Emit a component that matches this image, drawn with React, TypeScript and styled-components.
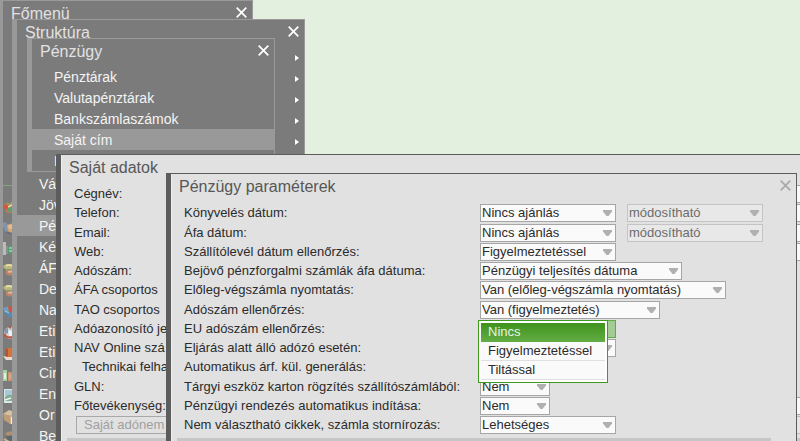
import React from "react";
import styled, { createGlobalStyle, css } from "styled-components";

const GlobalStyle = createGlobalStyle`
  *, *::before, *::after { box-sizing: border-box; }
  body {
    margin: 0;
    background: #e4f0df;
    font-family: "Liberation Sans", Arial, sans-serif;
    font-size: 13px;
    color: #2b2b2b;
  }
  button, input, select { font: inherit; color: inherit; }
`;

const Desktop = styled.main`
  position: relative;
  min-height: 100vh;
  overflow: hidden;
  background: #e4f0df;
`;

type Place = { $left: number; $top: number; $width?: number; $right?: number; $fill?: boolean };

const place = css<Place>`
  position: absolute;
  left: ${(p) => p.$left}px;
  top: ${(p) => p.$top}px;
  ${(p) => p.$width !== undefined && `width: ${p.$width}px;`}
  ${(p) => p.$right !== undefined && `right: ${p.$right}px;`}
  ${(p) => p.$fill && "bottom: 0;"}
  overflow: hidden;
`;

const MenuWindow = styled.nav<Place>`
  ${place}
  background: #7b7b7b;
  color: #f4f4f4;
  border: 1px solid #999;
  border-left-width: 5px;
  border-bottom-width: ${(p) => (p.$fill ? 0 : 1)}px;
  font-size: 14px;
`;

const FormWindow = styled.section<Place>`
  ${place}
  background: #e1e1e1;
  border: 1px solid #5c5c5c;
  border-left-width: 5px;
  border-bottom: 0;
  box-shadow: inset 1px 0 0 #f0f0f0;
`;

const Header = styled.header`
  display: flex;
  justify-content: space-between;
  align-items: flex-start;
  height: 27px;
  padding: 0 5px 0 8px;
`;

const Title = styled.h2<{ $dark?: boolean }>`
  margin: 0;
  font-size: 16px;
  font-weight: 400;
  line-height: 26px;
  color: ${(p) => (p.$dark ? "#575757" : "#e2e2e2")};
`;

const CloseButton = styled.button<{ $dim?: boolean }>`
  display: block;
  margin: 6px 0 0;
  padding: 0;
  border: 0;
  background: none;
  line-height: 0;
  color: ${(p) => (p.$dim ? "#a9a9a9" : "#fff")};
`;

const MenuList = styled.ul`
  margin: 0;
  padding: 0;
  list-style: none;
`;

const MenuItem = styled.li<{ $active?: boolean }>`
  display: flex;
  align-items: center;
  justify-content: space-between;
  height: 21px;
  padding: 0 5px 0 22px;
  line-height: 16px;
  background: ${(p) => (p.$active ? "#999" : "transparent")};
`;

const IconList = styled(MenuList)`
  margin-top: 157px;
  border-top: 1px solid #86a678;
  padding-top: 10px;
`;

const IconItem = styled.li`
  display: flex;
  align-items: center;
  height: 21px;
`;

const ownRows = css`
  > :nth-child(4n + 2) { margin-bottom: 1px; }
`;
const paramRows = css`
  > :nth-child(4n + 1) { margin-bottom: 1px; }
`;

const Form = styled.form<{ $own?: boolean }>`
  padding: 3px 0 0 13px;
  ${(p) => (p.$own ? ownRows : paramRows)}
`;

const FormRow = styled.div`
  display: flex;
  align-items: flex-start;
  height: 19px;
`;

const Label = styled.label<{ $width: number; $indent?: boolean }>`
  flex: none;
  width: ${(p) => p.$width}px;
  padding-left: ${(p) => (p.$indent ? 8 : 0)}px;
  line-height: 18px;
  white-space: nowrap;
`;

const TextBox = styled.input`
  flex: 1;
  min-width: 0;
  height: 18px;
  padding: 0 2px;
  border: 1px solid #a6a6a6;
  background: #fafafa;
  &:disabled { background: #e6e6e6; border-color: #bbb; }
`;

const PlainButton = styled.button`
  width: 120px;
  height: 18px;
  margin: 0 70px 0 2px;
  padding: 0 0 0 7px;
  border: 1px solid #a8a8a8;
  background: #e1e1e1;
  color: #a0a0a0;
  text-align: left;
  line-height: 16px;
`;

const SelectBox = styled.div<{ $width: number }>`
  position: relative;
  flex: none;
  width: ${(p) => p.$width}px;
  height: 18px;
  margin-right: 11px;
`;

const Select = styled.select<{ $open?: boolean }>`
  display: block;
  width: 100%;
  height: 18px;
  padding: 0 20px 0 1px;
  appearance: none;
  border: 1px solid ${(p) => (p.$open ? "#5cae40" : "#a6a6a6")};
  border-radius: 0;
  background: ${(p) => (p.$open ? "#a3cc95" : "#fafafa")};
  line-height: 16px;
  &:disabled {
    opacity: 1;
    color: #6c6c6c;
    background: #e8e8e8;
    border-color: #c4c4c4;
  }
`;

const Caret = styled.svg`
  position: absolute;
  right: 4px;
  top: 6px;
  pointer-events: none;
`;

const Popup = styled.ul`
  position: absolute;
  z-index: 1;
  left: -2px;
  top: 0;
  width: 130px;
  margin: 0;
  padding: 2px;
  list-style: none;
  border: 1px solid #3c9a1c;
  background: #fff;
`;

const PopupItem = styled.button<{ $selected?: boolean }>`
  display: block;
  width: 100%;
  height: 19px;
  padding: 0 0 0 7px;
  border: 0;
  border-bottom: 1px solid #e0e0e0;
  background: #fafafa;
  text-align: left;
  line-height: 18px;
  white-space: nowrap;
  ${(p) =>
    p.$selected &&
    css`
      background: linear-gradient(#3f921c, #62ac43);
      border-color: #62ac43;
      color: #e9f5e4;
    `}
`;

const Divider = styled.hr<{ $end: number }>`
  height: 8px;
  margin: 3px ${(p) => p.$end}px 0 6px;
  border: 0;
  background: #c6c6c6;
`;

function Close({ dim, label }: { dim?: boolean; label: string }) {
  return (
    <CloseButton $dim={dim} type="button" aria-label={label}>
      <svg width="11" height="11" viewBox="0 0 11 11" fill="none" stroke="currentColor" strokeWidth="1.7">
        <path d="M0.7 0.7 10.3 10.3M10.3 0.7 0.7 10.3" />
      </svg>
    </CloseButton>
  );
}

function SubmenuArrow() {
  return (
    <svg width="4" height="6" viewBox="0 0 4 6" fill="#fff" aria-hidden="true">
      <path d="M0 0 4 3 0 6Z" />
    </svg>
  );
}

const stack = (
  <>
    <path d="M0 5Q1 2 5 2H12Q15 3 15 6L13 7H2Z" fill="#b9b77c" />
    <path d="M3 4Q6 2 9 4" stroke="#e4dca6" strokeWidth="1.8" fill="none" />
    <path d="M2 7H14V9H3Z" fill="#8d9a62" />
    <path d="M3 9Q8 7 14 9V12Q8 15 3 12Z" fill="#c08468" />
    <path d="M5 10Q8 9 11 10" stroke="#e6b79c" strokeWidth="1.8" fill="none" />
  </>
);

const icons: React.ReactNode[] = [
  <>
    <path d="M1 6Q6 2 14 5L13 12Q8 16 3 13Z" fill="#cc7447" />
    <path d="M3 3 6 5 9 2V7L4 7Z" fill="#8fa06d" />
    <circle cx="3.5" cy="8" r="2.5" fill="#d2573a" />
    <path d="M4 10Q8 6 12 9L10 13H5Z" fill="#5aa273" />
    <path d="M5 8 9 6" stroke="#f0d1b0" strokeWidth="1.5" />
  </>,
  <>
    <path d="M0 2 4 3 6 12 3 13 0 7Z" fill="#7e93ad" />
    <path d="M4 5Q9 2 14 5V11Q9 14 5 11Z" fill="#d9a36e" />
    <path d="M5 6Q7 4 9 5V9H6Z" fill="#e8bb8b" />
    <path d="M3 12 8 14" stroke="#647080" strokeWidth="1.5" />
  </>,
  <>
    <path d="M0 1H3V14H0Z" fill="#b9bcbc" />
    <path d="M3 5H5V13H3Z" fill="#8b9390" />
    <circle cx="9" cy="9" r="4.5" fill="#559d6a" />
    <path d="M6 7H9M6 10H10" stroke="#a1cfaa" strokeWidth="1.3" />
  </>,
  stack,
  stack,
  <>
    <path d="M0 4 6 2V9L2 9Z" fill="#6e9dc1" />
    <path d="M5 2 13 3V8L6 9Z" fill="#ca5843" />
    <path d="M1 8 6 8 11 9 7 14Z" fill="#4f8fba" />
    <path d="M2 7 6 9" stroke="#a8c4d4" />
  </>,
  <>
    <circle cx="7" cy="8" r="6" fill="#c9ced4" />
    <path d="M1 5 5 3 5 8 2 9Z" fill="#8296aa" />
    <path d="M5 2 8 1V4Z" fill="#b5564a" />
    <path d="M5 6Q8 4 9 7V11H6Z" fill="#eef0f2" />
    <path d="M1 9Q4 14 9 12" stroke="#c0553f" strokeWidth="2" fill="none" />
  </>,
  <>
    <path d="M3 2H13V11H5Z" fill="#d8733a" />
    <path d="M3 2 5 3V11L2 12Z" fill="#a9573a" />
    <path d="M0 10 5 11 13 11V14H3Z" fill="#e8dccf" />
  </>,
  <>
    <path d="M0 3H4V14H0Z" fill="#a5d0a3" />
    <path d="M1 6H3V12H1Z" fill="#e1f1dd" />
    <path d="M5 5H9V14H5Z" fill="#d3916e" />
    <path d="M6 7H8V12H6Z" fill="#c9a98f" />
  </>,
  <>
    <path d="M1 1H15V15H1Z" fill="#dbe6ea" />
    <path d="M2 2H15V8H2Z" fill="#a9c9d8" />
    <path d="M2 9Q6 5 10 8L14 13H2Z" fill="#7bb08b" />
    <path d="M2 12 8 10" stroke="#e9f3ea" strokeWidth="1.5" />
  </>,
  <>
    <path d="M0 5 6 1 14 4 7 7Z" fill="#d8bf9f" />
    <path d="M0 5 7 7V15L1 11Z" fill="#bf9d78" />
    <path d="M7 7 14 4V12L7 15Z" fill="#d0b08a" />
    <path d="M8 8H12V15H8Z" fill="#efefef" />
  </>,
  <>
    <path d="M2 3 8 1 12 5 5 7Z" fill="#b3906d" />
    <path d="M3 6 12 5V11L5 12Z" fill="#5d686b" />
    <path d="M1 9 8 13" stroke="#d0b596" strokeWidth="2" />
  </>,
];

const structureItems = ["", "", "", "", "", "", "Vá", "Jöv", "Pé", "Ké", "ÁF", "De", "Na", "Eti", "Eti", "Cir", "En", "Or", "Be"];
const financeItems = ["Pénztárak", "Valutapénztárak", "Bankszámlaszámok", "Saját cím", "B"];

type OwnRow = { label: string; indent?: boolean; input?: boolean };
const ownData: OwnRow[] = [
  { label: "Cégnév:", input: true },
  { label: "Telefon:", input: true },
  { label: "Email:", input: true },
  { label: "Web:", input: true },
  { label: "Adószám:" },
  { label: "ÁFA csoportos" },
  { label: "TAO csoportos" },
  { label: "Adóazonosító je" },
  { label: "NAV Online szá" },
  { label: "Technikai felha", indent: true },
  { label: "GLN:" },
  { label: "Főtevékenység:", input: true },
];

type Param = { label: string; value: string; width: number; extra?: string; options?: string[] };
const params: Param[] = [
  { label: "Könyvelés dátum:", value: "Nincs ajánlás", width: 136, extra: "módosítható" },
  { label: "Áfa dátum:", value: "Nincs ajánlás", width: 136, extra: "módosítható" },
  { label: "Szállítólevél dátum ellenőrzés:", value: "Figyelmeztetéssel", width: 136 },
  { label: "Bejövő pénzforgalmi számlák áfa dátuma:", value: "Pénzügyi teljesítés dátuma", width: 202 },
  { label: "Előleg-végszámla nyomtatás:", value: "Van (előleg-végszámla nyomtatás)", width: 246 },
  { label: "Adószám ellenőrzés:", value: "Van (figyelmeztetés)", width: 180 },
  { label: "EU adószám ellenőrzés:", value: "Nincs", width: 136, options: ["Nincs", "Figyelmeztetéssel", "Tiltással"] },
  { label: "Eljárás alatt álló adózó esetén:", value: "Nincs", width: 136 },
  { label: "Automatikus árf. kül. generálás:", value: "Nem", width: 70 },
  { label: "Tárgyi eszköz karton rögzítés szállítószámlából:", value: "Nem", width: 70 },
  { label: "Pénzügyi rendezés automatikus indítása:", value: "Nem", width: 70 },
  { label: "Nem választható cikkek, számla stornírozás:", value: "Lehetséges", width: 136 },
];

type DropDownProps = { id?: string; value: string; width: number; disabled?: boolean; options?: string[]; label?: string };

function DropDown({ id, value, width, disabled, options, label }: DropDownProps) {
  return (
    <SelectBox $width={width}>
      <Select id={id} aria-label={label} disabled={disabled} $open={!!options} defaultValue={value}>
        {(options ?? [value]).map((o) => (
          <option key={o}>{o}</option>
        ))}
      </Select>
      {!options && (
        <Caret width="9" height="6" viewBox="0 0 9 6" fill="#b0b0b0" aria-hidden="true">
          <path d="M0 0H9V1.5L5.5 6H3.5L0 1.5Z" />
        </Caret>
      )}
      {options && (
        <Popup>
          {options.map((o) => (
            <li key={o}>
              <PopupItem type="button" $selected={o === value}>{o}</PopupItem>
            </li>
          ))}
        </Popup>
      )}
    </SelectBox>
  );
}

export default function App() {
  return (
    <>
      <GlobalStyle />
      <Desktop>
        <MenuWindow $left={-2} $top={0} $width={255} $fill>
          <Header>
            <Title>Főmenü</Title>
            <Close label="Főmenü bezárása" />
          </Header>
          <IconList>
            {icons.map((icon, i) => (
              <IconItem key={i}>
                <svg width="16" height="16" viewBox="0 0 16 16" aria-hidden="true">{icon}</svg>
              </IconItem>
            ))}
          </IconList>
        </MenuWindow>

        <MenuWindow $left={12} $top={19} $width={293} $fill>
          <Header>
            <Title>Struktúra</Title>
            <Close label="Struktúra bezárása" />
          </Header>
          <MenuList>
            {structureItems.map((item, i) => (
              <MenuItem key={i} $active={item === "Pé"}>
                <span>{item}</span>
                <SubmenuArrow />
              </MenuItem>
            ))}
          </MenuList>
        </MenuWindow>

        <MenuWindow $left={27} $top={38} $width={248}>
          <Header>
            <Title>Pénzügy</Title>
            <Close label="Pénzügy bezárása" />
          </Header>
          <MenuList>
            {financeItems.map((item) => (
              <MenuItem key={item} $active={item === "Saját cím"}>{item}</MenuItem>
            ))}
          </MenuList>
        </MenuWindow>

        <FormWindow $left={56} $top={154} $right={-40} $fill>
          <Header>
            <Title $dark>Saját adatok</Title>
          </Header>
          <Form $own>
            {ownData.map((row, i) => (
              <FormRow key={row.label}>
                <Label htmlFor={row.input ? `own-${i}` : undefined} $width={192} $indent={row.indent}>{row.label}</Label>
                {row.input && <TextBox id={`own-${i}`} type="text" />}
              </FormRow>
            ))}
            <FormRow>
              <PlainButton type="button" disabled>Saját adónem</PlainButton>
              <TextBox type="text" disabled aria-label="Saját adónem" />
            </FormRow>
          </Form>
          <Divider $end={0} />
        </FormWindow>

        <FormWindow $left={166} $top={173} $right={3} $fill>
          <Header>
            <Title $dark>Pénzügy paraméterek</Title>
            <Close dim label="Pénzügy paraméterek bezárása" />
          </Header>
          <Form>
            {params.map((p, i) => (
              <FormRow key={p.label}>
                <Label htmlFor={`param-${i}`} $width={296}>{p.label}</Label>
                <DropDown id={`param-${i}`} value={p.value} width={p.width} options={p.options} />
                {p.extra && <DropDown value={p.extra} width={136} disabled label={`${p.label} ${p.extra}`} />}
              </FormRow>
            ))}
          </Form>
          <Divider $end={25} />
        </FormWindow>
      </Desktop>
    </>
  );
}
